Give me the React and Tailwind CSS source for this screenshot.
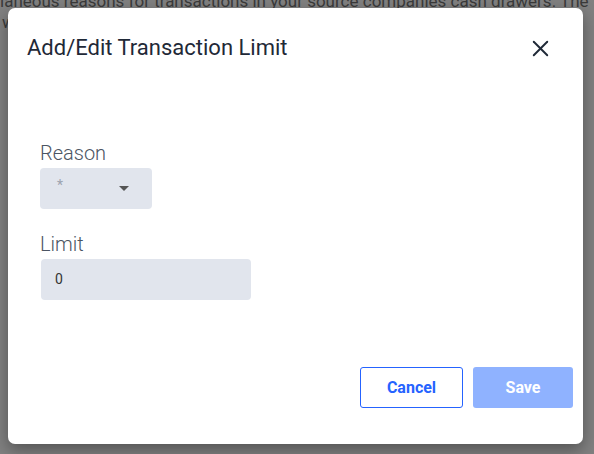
import { X } from 'lucide-react';

const font = { fontFamily: 'Roboto, "Liberation Sans", sans-serif' };

export default function App() {
  return (
    <div className="relative w-[594px] h-[454px] overflow-hidden bg-[#808080]" style={font}>
      {/* page behind the backdrop */}
      <div className="-mt-[9px] text-[17px] leading-[21px] text-[#3a3a3a] whitespace-nowrap">
        <p>laneous reasons for transactions in your source companies cash drawers. The</p>
        <p className="pl-[2px]">w</p>
      </div>

      {/* dialog */}
      <div className="absolute left-[8px] top-[8px] w-[575px] h-[436px] bg-white rounded-[7px] shadow-[0_6px_16px_rgba(0,0,0,0.35)] flex flex-col">
        <div className="flex items-center justify-between pl-[19px] pr-[29px] pt-[26px]">
          <h2 className="text-[22px] leading-[28px] text-[#1f2937] font-normal">Add/Edit Transaction Limit</h2>
          <button className="text-[#1f2937]">
            <X className="w-[27px] h-[27px]" strokeWidth={1.7} />
          </button>
        </div>

        <div className="flex flex-col pl-[32px] pt-[79px]">
          <label className="text-[20px] leading-[24px] font-light text-[#4b5563]">Reason</label>
          <div className="mt-[3px] w-[112px] h-[41px] rounded-[4px] bg-[#e1e5ed] flex items-center justify-between pl-[17px] pr-[23px]">
            <span className="text-[14px] text-[#9ca3af] -mt-[6px]">*</span>
            <span className="w-0 h-0 border-l-[5px] border-r-[5px] border-t-[5px] border-l-transparent border-r-transparent border-t-[#555]"></span>
          </div>

          <label className="mt-[23px] text-[20px] leading-[24px] font-light text-[#4b5563]">Limit</label>
          <div className="mt-[3px] ml-[1px] w-[210px] h-[41px] rounded-[4px] bg-[#e1e5ed] flex items-center pl-[14px]">
            <span className="text-[14px] text-[#333]">0</span>
          </div>
        </div>

        <div className="mt-auto mb-[36px] flex justify-end gap-[10px] pr-[10px]">
          <button className="w-[103px] h-[41px] rounded-[3px] border border-[#2563ff] bg-white text-[#2563ff] text-[16px] font-bold">
            Cancel
          </button>
          <button className="w-[100px] h-[41px] rounded-[3px] bg-[#8fb2ff] text-white text-[16px] font-bold">
            Save
          </button>
        </div>
      </div>
    </div>
  );
}
